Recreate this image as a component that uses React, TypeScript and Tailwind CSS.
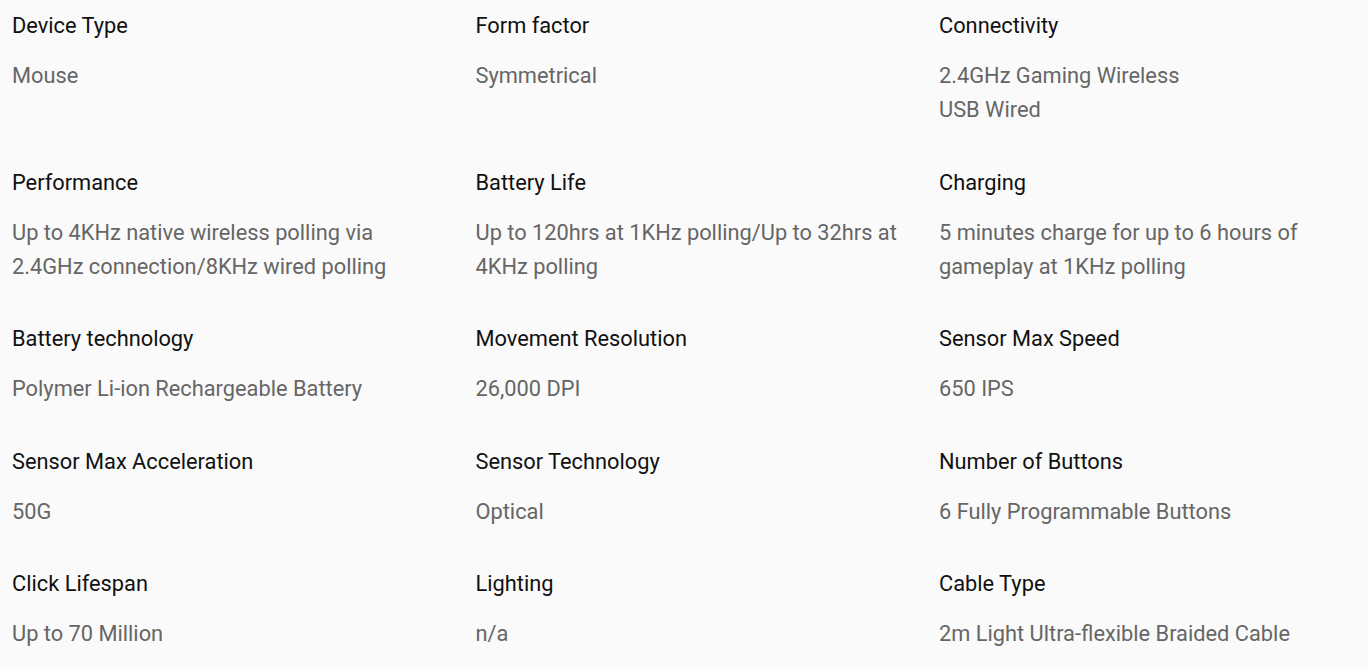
import React from "react";

const specs = [
  { label: "Device Type", value: ["Mouse"] },
  { label: "Form factor", value: ["Symmetrical"] },
  { label: "Connectivity", value: ["2.4GHz Gaming Wireless", "USB Wired"] },
  { label: "Performance", value: ["Up to 4KHz native wireless polling via 2.4GHz connection/8KHz wired polling"] },
  { label: "Battery Life", value: ["Up to 120hrs at 1KHz polling/Up to 32hrs at 4KHz polling"] },
  { label: "Charging", value: ["5 minutes charge for up to 6 hours of gameplay at 1KHz polling"] },
  { label: "Battery technology", value: ["Polymer Li-ion Rechargeable Battery"] },
  { label: "Movement Resolution", value: ["26,000 DPI"] },
  { label: "Sensor Max Speed", value: ["650 IPS"] },
  { label: "Sensor Max Acceleration", value: ["50G"] },
  { label: "Sensor Technology", value: ["Optical"] },
  { label: "Number of Buttons", value: ["6 Fully Programmable Buttons"] },
  { label: "Click Lifespan", value: ["Up to 70 Million"] },
  { label: "Lighting", value: ["n/a"] },
  { label: "Cable Type", value: ["2m Light Ultra-flexible Braided Cable"] },
];

export default function App() {
  return (
    <div className="min-h-screen bg-[#fafafa] font-['Roboto',sans-serif]">
      <div className="grid grid-cols-[430px_430px_430px] gap-x-[33.5px] gap-y-[38.5px] pl-3 pt-[9px]">
        {specs.map((spec) => (
          <div key={spec.label} className="flex flex-col">
            <div className="text-[21.8px] leading-[34px] text-[#111]">{spec.label}</div>
            <div className="mt-4 text-[21.8px] leading-[34px] text-[#666]">
              {spec.value.map((line) => (
                <div key={line}>{line}</div>
              ))}
            </div>
          </div>
        ))}
      </div>
    </div>
  );
}
